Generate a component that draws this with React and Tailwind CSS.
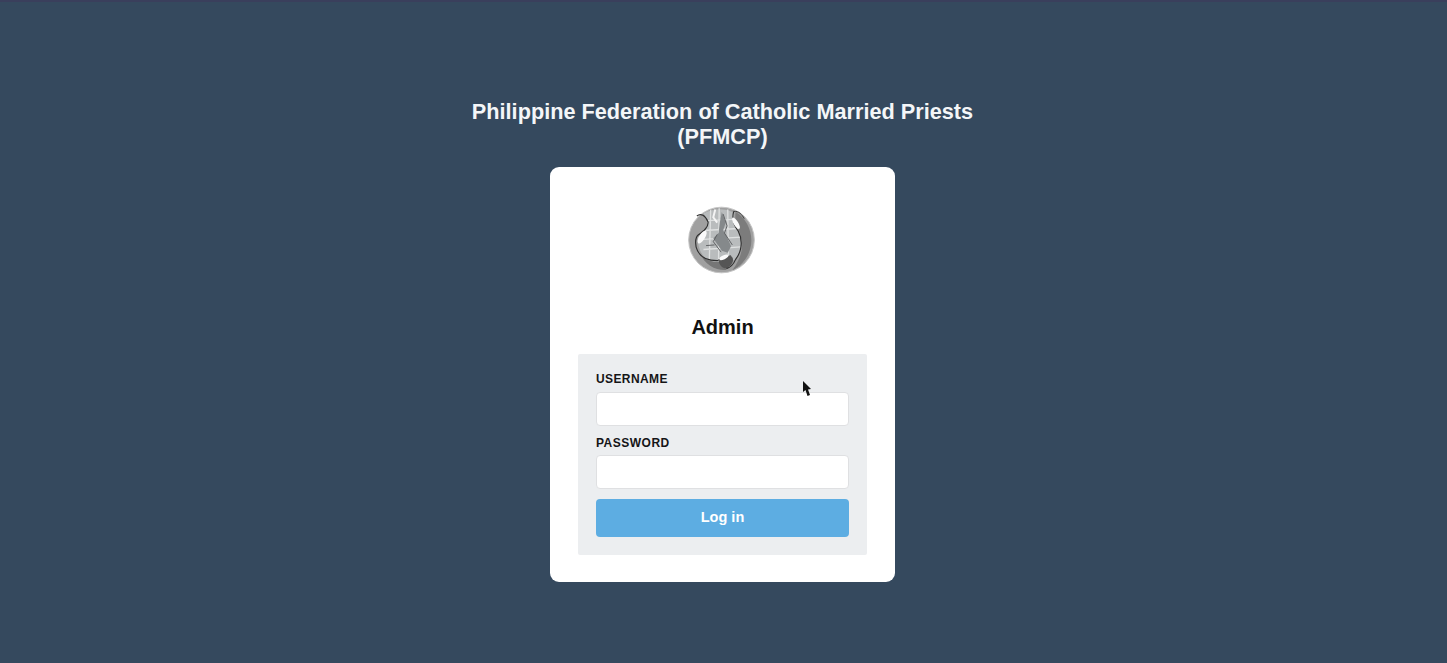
import React from 'react';

// traced roughly from the emblem, viewBox is in zoomed pixels
const Logo = () => (
  <svg width="67" height="68" viewBox="15 11 204 204" className="block blur-[0.4px]">
    <circle cx="117" cy="113" r="100" fill="#a0a0a0" stroke="#c4c4c4" strokeWidth="3" />
    <path d="M160 28 C190 45 208 80 208 115 C208 150 185 190 150 205 C176 170 186 135 176 100 C170 78 155 60 160 28 Z" fill="#7c7c7c" />
    <path d="M50 150 C62 172 90 182 112 180 C124 190 130 198 132 204 C100 206 66 190 50 150 Z" fill="#767676" />
    <path d="M62 32 Q112 8 156 30 C150 55 160 72 172 92 C180 125 176 150 160 172 C135 180 100 182 72 172 C52 155 42 125 46 105 C60 95 74 82 74 62 C72 50 66 40 62 32 Z" fill="#b9bcbd" />
    <path d="M84 22 L80 172 M110 16 L108 178 M136 20 L138 178 M50 112 L176 104 M62 84 L168 78 M62 142 L176 134 M74 54 L152 50" stroke="#dfe1e1" strokeWidth="4" fill="none" />
    <path d="M118 28 L130 60 L122 84 L134 104 L146 132 L136 152 L118 146 L100 120 L92 108 L108 92 L112 60 Z" fill="#85898b" />
    <path d="M122 34 L134 70 L126 92 L150 128 M104 96 L92 118 L116 150 M70 130 L96 128" stroke="#5f6264" strokeWidth="3" fill="none" />
    <path d="M98 20 L92 44 L104 60" stroke="#f4f4f4" strokeWidth="6" fill="none" />
    <path d="M42 40 C54 30 68 38 76 58 C78 74 62 86 46 98 C36 106 36 132 44 146 C54 166 72 176 104 176 C118 172 130 160 146 162" fill="none" stroke="#2f2f2f" strokeWidth="3.5" />
    <path d="M108 176 C122 168 134 160 146 162 C158 170 152 190 132 200 C118 198 110 188 108 176 Z" fill="#555555" />
    <path d="M154 26 C148 50 152 66 168 86 C182 112 180 146 160 172 C154 186 146 196 132 200" fill="none" stroke="#2f2f2f" strokeWidth="3.5" />
    <path d="M154 26 C170 24 180 36 186 48" fill="none" stroke="#3a3a3a" strokeWidth="3" />
    <ellipse cx="58" cy="104" rx="9" ry="22" transform="rotate(32 58 104)" fill="#fafafa" />
    <ellipse cx="161" cy="62" rx="7" ry="20" transform="rotate(-32 161 62)" fill="#fafafa" />
    <ellipse cx="124" cy="166" rx="15" ry="6" transform="rotate(-25 124 166)" fill="#fafafa" />
  </svg>
);

const Field = ({ label, type, className, tracking, gap }) => (
  <div className={className}>
    <label className={`block text-[12px] leading-[14px] font-bold text-[#151517] ${tracking}`}>{label}</label>
    <input
      type={type}
      className={`block w-full h-[34px] ${gap} bg-white rounded-[4px] border border-[#dfe0e2] outline-none`}
    />
  </div>
);

export default function App() {
  return (
    <div className="relative min-h-[663px] h-screen bg-[#35495e] border-t-2 border-[#3a3f5c] overflow-hidden flex flex-col items-center pt-[97px] pr-[2px] font-['Liberation_Sans',Arial,sans-serif]">
      <h1 className="text-[21.7px] leading-[25px] font-bold text-[#f4f6f8] text-center whitespace-nowrap">
        Philippine Federation of Catholic Married Priests
        <br />
        (PFMCP)
      </h1>

      <div className="w-[345px] h-[415px] mt-[18px] bg-white rounded-[9px] px-[28px] pt-[39px] flex flex-col">
        <div className="flex justify-center pr-[3px]">
          <Logo />
        </div>
        <h2 className="mt-[41px] text-[20px] leading-[24px] font-bold text-[#111] text-center">Admin</h2>
        <form className="mt-[15px] bg-[#eceef0] rounded-[2px] px-[18px] pt-[18px] pb-[18px]">
          <Field label="USERNAME" type="text" tracking="tracking-[0.4px]" gap="mt-[6px]" />
          <Field label="PASSWORD" type="password" className="mt-[10px]" tracking="tracking-[0.5px]" gap="mt-[5px]" />
          <button
            type="button"
            className="block w-full h-[38px] mt-[10px] bg-[#5dade2] rounded-[4px] text-white text-[14.5px] font-bold"
          >
            Log in
          </button>
        </form>
      </div>

      {/* mouse pointer in the recording */}
      <svg width="10" height="17" viewBox="0 0 10 17" className="absolute left-[802px] top-[379px]">
        <path d="M1 0 L1 11 L3.5 9 L5.5 15 L8 14 L6 8.5 L9 8 Z" fill="#111" />
      </svg>
    </div>
  );
}
